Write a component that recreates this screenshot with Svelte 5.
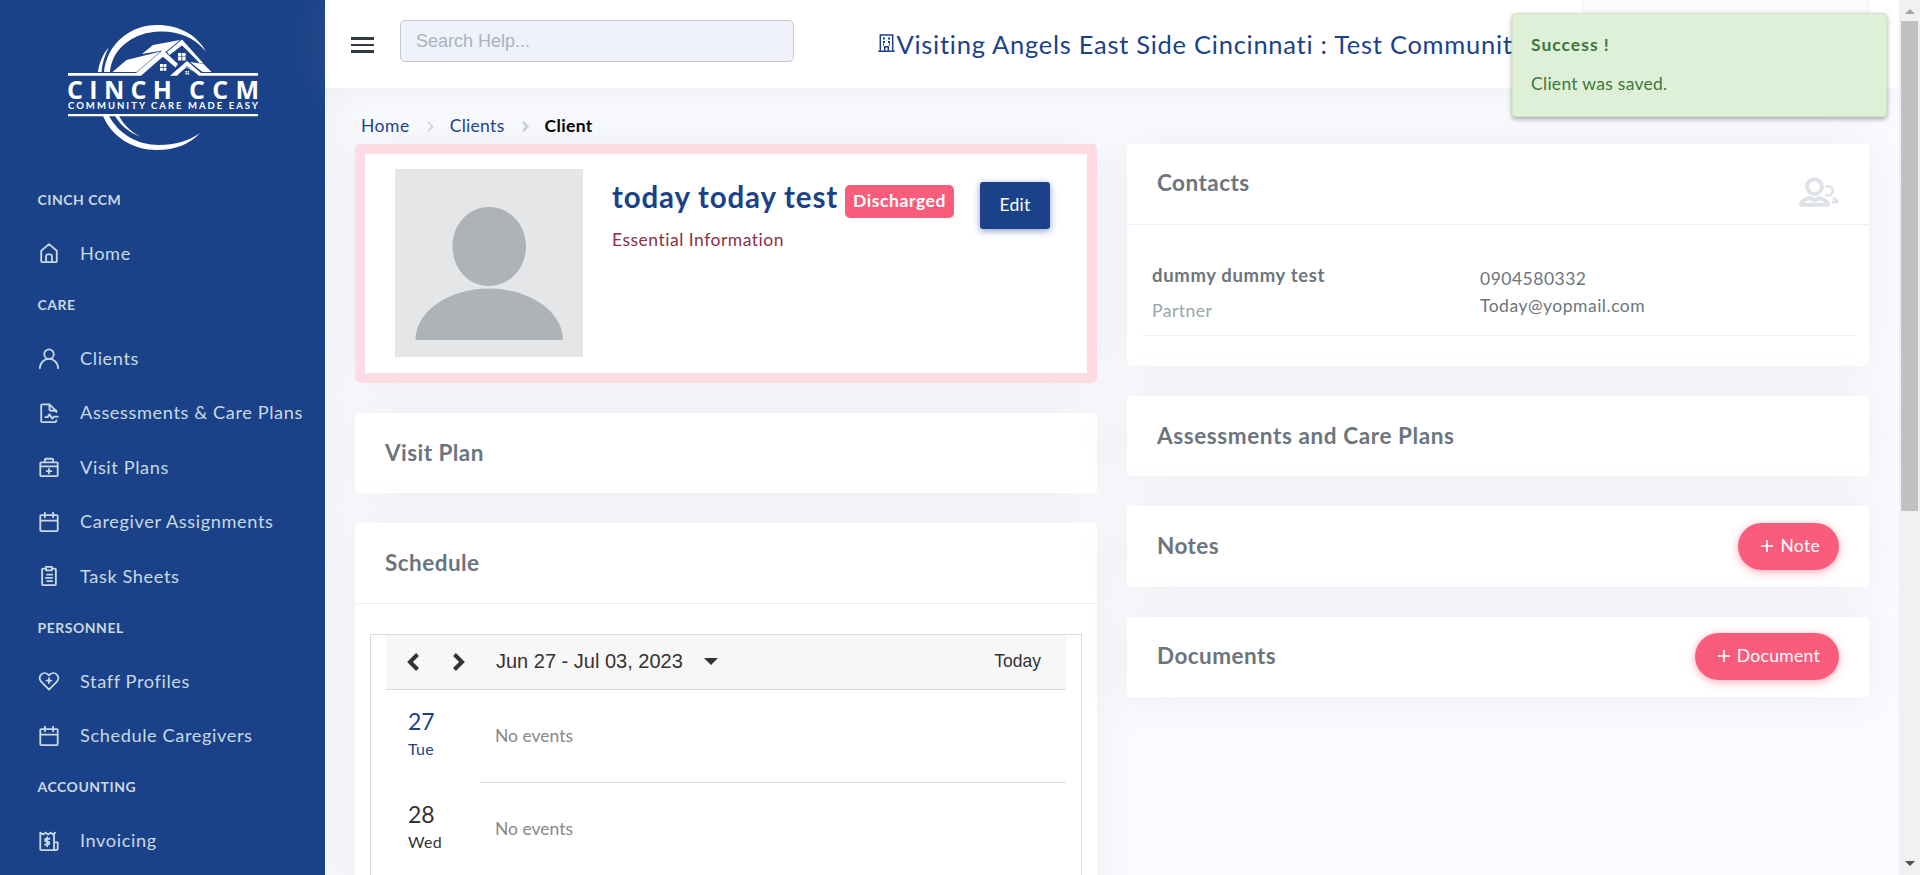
<script>
  const menu = [
    { title: 'CINCH CCM', items: [{ label: 'Home', icon: 'home' }] },
    {
      title: 'CARE',
      items: [
        { label: 'Clients', icon: 'user' },
        { label: 'Assessments & Care Plans', icon: 'file' },
        { label: 'Visit Plans', icon: 'medkit' },
        { label: 'Caregiver Assignments', icon: 'calendar' },
        { label: 'Task Sheets', icon: 'clipboard' }
      ]
    },
    {
      title: 'PERSONNEL',
      items: [
        { label: 'Staff Profiles', icon: 'heart' },
        { label: 'Schedule Caregivers', icon: 'calendar' }
      ]
    },
    { title: 'ACCOUNTING', items: [{ label: 'Invoicing', icon: 'invoice' }] }
  ];

  const icons = {
    home: 'M3.500 9.500 12 2.300l8.500 7.200V21a1 1 0 0 1-1 1h-15a1 1 0 0 1-1-1ZM8.800 22v-6.500a2 2 0 0 1 2-2h2.400a2 2 0 0 1 2 2V22',
    user: 'M12 13a5.200 5.200 0 1 0 0-10.400a5.200 5.200 0 0 0 0 10.400ZM2 23c.3-5.800 4.500-10 10-10s9.700 4.200 10 10',
    file: 'M12.500 2.500h-8a1 1 0 0 0-1 1v17.500a1 1 0 0 0 1 1h13.500a2 2 0 0 0 2-2M12.500 2.500l7.500 7.500M12.500 2.500V7.500a2 2 0 0 0 2 2H20v1.500M8 16.500h2.500l2-3 3 4.500 2-2H21.500',
    medkit: 'M3.500 7h17a1 1 0 0 1 1 1v13a1 1 0 0 1-1 1h-17a1 1 0 0 1-1-1V8a1 1 0 0 1 1-1ZM7.500 7V4a1 1 0 0 1 1-1h7a1 1 0 0 1 1 1v3M2.500 11.300h19M12 14v5M9.500 16.500h5',
    calendar: 'M3.500 4.500h17a1 1 0 0 1 1 1V21a1 1 0 0 1-1 1h-17a1 1 0 0 1-1-1V5.500a1 1 0 0 1 1-1ZM2.500 10.500h19M7.500 1.800v5M16.500 1.800v5',
    clipboard: 'M8.500 4H5.500a1 1 0 0 0-1 1v16a1 1 0 0 0 1 1h13a1 1 0 0 0 1-1V5a1 1 0 0 0-1-1h-3M8.800 2h6.400v3.800H8.800ZM10 10.500h5.500M8.500 14h7M10 17.500h5.500',
    heart: 'M12 21.500 3.400 12.700a5.400 5.400 0 0 1 0-7.700 5.500 5.500 0 0 1 7.700 0l.9.700.9-.7a5.500 5.500 0 0 1 7.700 0 5.400 5.400 0 0 1 0 7.700ZM12 8.800v5.400M9.300 11.500h5.400',
    invoice: 'M2.500 3l3 1.800L8.300 3l2.700 1.800L13.700 3l3 1.800L18.500 3M2.500 3v18a1 1 0 0 0 1 1h16a2 2 0 0 0 2-2v-6.500h-4M17.500 4v16a2 2 0 0 0 2 2M12.500 9.500H9.300a1.600 1.600 0 0 0 0 3.200h1.400a1.600 1.600 0 0 1 0 3.200H7.500M10 7.800v10'
  };

  const days = [
    { num: '27', name: 'Tue', today: true },
    { num: '28', name: 'Wed', today: false }
  ];
</script>

<div class="page">
  <aside>
    <div class="brand">
      <svg width="194" height="130" viewBox="66 23 194 130" fill="#fff">
        <path d="M104 72C107 43 131 25 157 25c22 0 40 10 49 26.500C194 37 178 31 160 31.500 134 32 112 48 110 72ZM98 72c1-9 5-18 11-25-4 8-7 16-7.500 25Z" />
        <path d="M103 116h6c10 18 28 29 50 29 16 0 30-4 41-12-10 11-25 17-43 17-24 0-45-13-54-34ZM115 116h4c5 9 12 16 22 21-11-4-20-11-26-21Z" />
        <path d="M68 73h68l27-23 15 14-2.500 3.500L163 56.500 141 75.700H68ZM112.500 72l14-12 34-8.500-24 20.500ZM142 54l11-9 27-5-14.500 12-3-1.500ZM167 52l15-12.500 21.500 24-4-.5L182 45l-12.500 10ZM170 75.700 187 61l14 12h57v2.700h-59L187 66l-10 9.700ZM190 62l13.500 2 8 8h-9Z" />
        <path d="M153 63l10-6.500 9 7M174 51l8-6 10 9M181 71l6-4 6 4" fill="none" stroke="#fff" stroke-width=".7" />
        <path d="M160 64h2.900v3H160zM163.500 64h2.900v3h-2.900zM160 67.700h2.900v3H160zM163.500 67.700h2.900v3h-2.900zM178 53h3.400v3.400H178zM182.200 53h3.400v3.400h-3.400zM178 57h3.400v3.400H178zM182.200 57h3.400v3.400h-3.400zM185.500 71h1.500v1.500h-1.500zM187.600 71h1.500v1.500h-1.500zM185.500 73.100h1.500v1.500h-1.500zM187.600 73.100h1.500v1.500h-1.500z" />
        <path d="M68 114h190v2.200H68z" />
        <text x="67" y="98.500" class="logo1" textLength="105">CINCH</text>
        <text x="189" y="98.500" class="logo1" textLength="70">CCM</text>
        <text x="68" y="109" class="logo2" textLength="190">COMMUNITY CARE MADE EASY</text>
      </svg>
    </div>
    <nav>
      {#each menu as group}
        <h6>{group.title}</h6>
        {#each group.items as item}
          <a href="#top">
            <svg width="22" height="22" viewBox="0 0 24 24"><path d={icons[item.icon]} /></svg>
            <span>{item.label}</span>
          </a>
        {/each}
      {/each}
    </nav>
  </aside>

  <div class="main">
    <header>
      <div class="burger"><i></i><i></i><i></i></div>
      <div class="search"><span>Search Help...</span></div>
      <div class="org">
        <svg width="17" height="18" viewBox="0 0 17 18" fill="none" stroke="#1b4289" stroke-width="1.500"><path d="M2.300 17V1h12.400v16M.3 17.200h16.400M6.700 17v-4.200h3.600V17" /><path d="M5 4.500h2M10 4.500h2M5 8h2M10 8h2M5 10.500h1M11 10.500h1" stroke-width="1.800" /></svg>
        <span>Visiting Angels East Side Cincinnati : Test Community</span>
      </div>
      <div class="account"></div>
    </header>

    <div class="crumbs">
      <span>Home</span>
      <svg width="8" height="11" viewBox="0 0 8 11"><path d="M2 1l4.500 4.500L2 10" stroke-width="1.700" /></svg>
      <span class="second">Clients</span>
      <svg width="8" height="11" viewBox="0 0 8 11"><path d="M2 1l4.500 4.500L2 10" stroke-width="2.600" /></svg>
      <b>Client</b>
    </div>

    <div class="columns">
      <div class="col">
        <section class="card profile">
          <svg class="avatar" width="188" height="188" viewBox="0 0 188 188"><path fill="#e4e6e8" d="M0 0h188v188H0z" /><path fill="#aeb3b7" d="M94 38c21 0 37 18 37 39.500S115 117 94 117 57.500 99 57.500 77.500 73 38 94 38ZM20.500 171c0-29 34-51.500 73.500-51.500s74 22.500 74 51.500Z" /></svg>
          <div class="who">
            <div class="nameline"><span class="name">today today test</span><span class="badge">Discharged</span></div>
            <div class="essential">Essential Information</div>
          </div>
          <button class="edit">Edit</button>
        </section>

        <section class="card bar"><h4>Visit Plan</h4></section>

        <section class="card schedule">
          <div class="head"><h4>Schedule</h4></div>
          <div class="calendar">
            <div class="tools">
              <svg width="12" height="18" viewBox="0 0 12 18"><path d="M10.500 1.500 3 9l7.500 7.500" /></svg>
              <svg width="12" height="18" viewBox="0 0 12 18"><path d="M1.500 1.500 9 9l-7.500 7.500" /></svg>
              <span class="range">Jun 27 - Jul 03, 2023</span>
              <i class="caret"></i>
              <span class="today">Today</span>
            </div>
            {#each days as day}
              <div class="day">
                <div class="date" class:current={day.today}><span class="num">{day.num}</span><span class="dow">{day.name}</span></div>
                <div class="events">No events</div>
              </div>
            {/each}
          </div>
        </section>
      </div>

      <div class="col">
        <section class="card contacts">
          <div class="head">
            <h4>Contacts</h4>
            <svg width="40" height="30" viewBox="0 0 40 30"><path d="M15.500 2.200a7.400 7.400 0 1 1 0 14.800a7.400 7.400 0 0 1 0-14.800Z" /><path d="M2 27.800c0-3.500 5-6.300 9.300-6.600 2.200 0 2.500 2 4.200 2s2-2 4.200-2c4.300.3 9.300 3.100 9.300 6.600Z" /><path d="M26.500 10.200a4.600 4.600 0 1 1-.5 7M34 20.600c2.200 1.200 4 2.800 4.200 4.400h-5.200" stroke-width="2.600" /></svg>
          </div>
          <div class="person">
            <div class="left"><b>dummy dummy test</b><span class="role">Partner</span></div>
            <div class="right"><span>0904580332</span><span>Today@yopmail.com</span></div>
          </div>
        </section>
        <section class="card bar"><h4 class="long">Assessments and Care Plans</h4></section>
        <section class="card bar"><h4>Notes</h4><button class="add"><svg width="12" height="12" viewBox="0 0 12 12"><path d="M6 0v12M0 6h12" /></svg><span>Note</span></button></section>
        <section class="card bar"><h4>Documents</h4><button class="add"><svg width="12" height="12" viewBox="0 0 12 12"><path d="M6 0v12M0 6h12" /></svg><span>Document</span></button></section>
      </div>
    </div>
  </div>

  <div class="scrollbar"><i class="up"></i><div class="thumb"></div><i class="down"></i></div>

  <div class="toast"><b>Success !</b><span>Client was saved.</span></div>
</div>

<style>
  :global(body) { margin: 0; overflow: hidden; }
  .page { display: flex; position: relative; width: 1920px; height: 875px; overflow: hidden; background: #fafbfe; color: #6c757d; font: 17.500px/1.500 Lato, sans-serif; letter-spacing: .5px; }
  .page * { box-sizing: border-box; }
  span, h4, b { white-space: nowrap; }
  aside { flex: none; width: 325px; height: 875px; background: #1b4289; box-shadow: 0 0 44px rgba(154, 161, 171, .15); }
  .brand { height: 175.500px; padding: 23px 0 0 66px; }
  .brand svg { display: block; letter-spacing: 0; }
  .logo1 { font: 700 25px "Open Sans", sans-serif; }
  .logo2 { font: 700 9.500px Lato, sans-serif; }
  h6 { margin: 0; height: 50.500px; padding: 14px 0 0 37.500px; font-size: 14px; line-height: 20px; font-weight: 700; letter-spacing: .52px; color: #c8d9e3; }
  nav a { display: flex; align-items: center; height: 54.500px; padding-left: 37.500px; gap: 20.500px; color: #c8d9e3; text-decoration: none; font-size: 18.200px; letter-spacing: .6px; }
  nav svg { flex: none; fill: none; stroke: #c8d9e3; stroke-width: 2; stroke-linejoin: round; stroke-linecap: round; }

  .main { flex: none; width: 1574px; height: 875px; }
  header { position: relative; display: flex; height: 88px; background: #fff; box-shadow: 0 0 44px rgba(154, 161, 171, .15); }
  .burger { display: flex; flex-direction: column; gap: 4px; margin: 37px 0 0 26px; }
  .burger i { width: 23px; height: 2.500px; background: #313a46; }
  .search { width: 394px; height: 42px; margin: 20px 0 0 26px; padding: 0 15px; border: 1px solid #c8c8c8; border-radius: 5px; background: #eff2fa; color: #a9b4bf; font: 18px/41px "Liberation Sans", sans-serif; letter-spacing: 0; }
  .org { position: relative; z-index: 1; display: flex; align-items: center; gap: 1.500px; height: 88px; margin-left: 84px; color: #1b4289; font-size: 25.500px; letter-spacing: .73px; }
  .org svg { margin-top: -3px; }
  .account { position: absolute; left: 1257px; top: 0; width: 287px; height: 88px; border: 1px solid #eff1f9; border-top: 0; background: #fafbfd; }
  .crumbs { display: flex; align-items: center; height: 56px; padding: 20px 0 0 36px; gap: 16px; color: #1b4289; }
  .crumbs svg { fill: none; stroke: #cbd2d9; }
  .crumbs .second { letter-spacing: .3px; }
  .crumbs b { color: #000; letter-spacing: .35px; }
  .columns { display: grid; grid-template-columns: 742px 742px; gap: 30px; padding-left: 30px; }
  .col { display: flex; flex-direction: column; gap: 30px; }
  .card { background: #fff; border-radius: 4px; box-shadow: 0 0 44px rgba(154, 161, 171, .15); }
  h4 { margin: -1px 0 0; font-size: 22.500px; line-height: 30px; font-weight: 700; letter-spacing: .45px; color: #6c757d; }
  .long { letter-spacing: .6px; }
  .profile { display: flex; align-items: flex-start; height: 239px; border: 10px solid #fddde3; border-radius: 5px; padding: 15px 30px; }
  .who { width: 368px; padding: 9px 0 0 29px; }
  .nameline { display: flex; align-items: center; gap: 7px; height: 47px; }
  .name { color: #1b4289; font-size: 29.500px; font-weight: 700; line-height: 38px; padding-bottom: 9px; letter-spacing: .830px; }
  .badge { height: 33px; padding: 0 8px; border-radius: 5px; background: #fa5c7c; color: #fff; font-weight: 700; line-height: 32px; letter-spacing: .57px; }
  .essential { padding-top: 2px; color: #8b2f47; }
  button { border: 0; color: #fff; font: inherit; letter-spacing: .3px; }
  .edit { width: 70px; height: 47px; margin: 13px 0 0 29px; padding: 0; border-radius: 3px; background: #1b4289; box-shadow: 0 2px 7px rgba(27, 66, 137, .5); }
  .bar { display: flex; align-items: center; justify-content: space-between; height: 80.400px; padding: 0 30px; }
  .head { display: flex; align-items: center; height: 80.500px; padding: 0 30px; border-bottom: 1px solid #eef0f5; }
  .schedule { height: 600px; }
  .calendar { width: 712px; height: 500px; margin: 30px 0 0 15px; padding: 0 15px; border: 1px solid #dadada; }
  .tools { display: flex; align-items: center; height: 55px; padding: 0 25px 0 21px; background: #f7f7f7; border-bottom: 1px solid #dadada; color: #333; font: 20px "Liberation Sans", sans-serif; letter-spacing: 0; }
  .tools svg { fill: none; stroke: #333; stroke-width: 4; margin-right: 34px; }
  .range { margin-left: -3px; }
  .caret { margin-left: 21px; border: 7px solid transparent; border-top-color: #333; border-bottom: 0; }
  .today { margin-left: auto; font-size: 17.500px; }
  .day { display: flex; height: 93px; }
  .date { display: flex; flex-direction: column; width: 94px; padding: 14px 0 0 22px; color: #333; }
  .date.current { color: #1b4289; }
  .num { font-size: 23px; line-height: 34px; letter-spacing: 0; }
  .dow { font-size: 16px; line-height: 22px; letter-spacing: .3px; }
  .events { flex: 1; padding: 33px 0 0 15px; border-bottom: 1px solid #dadada; color: #888; letter-spacing: 0; }
  .contacts { height: 222px; }
  .contacts .head { justify-content: space-between; }
  .contacts .head svg { margin-top: 16px; fill: none; stroke: #dee2e6; stroke-width: 4; stroke-linejoin: round; stroke-linecap: butt; }
  .person { display: flex; height: 111px; margin: 0 15px; padding: 37px 10px 0; border-bottom: 1px solid #eef0f2; }
  .left { display: flex; flex-direction: column; width: 328px; gap: 10px; }
  .left b { font-size: 18.500px; letter-spacing: .65px; line-height: 26px; }
  .right { display: flex; flex-direction: column; padding-top: 3px; line-height: 27.500px; }
  .role { color: #98a6ad; }
  .add { display: flex; align-items: center; height: 47px; margin-top: -1px; padding: 0 19px 0 23px; gap: 7px; border-radius: 24px; background: #fa5c7c; box-shadow: 0 2px 8px rgba(250, 92, 124, .5); }
  .add svg { stroke: #fff; stroke-width: 1.700; }
  .scrollbar { position: relative; z-index: 2; display: flex; flex-direction: column; align-items: center; width: 21px; height: 875px; background: #f1f1f1; }
  .thumb { width: 17px; height: 490px; background: #c1c1c1; margin-top: 7px; }
  .up { margin-top: 9px; border: 5px solid transparent; border-bottom-color: #a3a3a3; border-top: 0; }
  .down { margin-top: 350px; border: 5px solid transparent; border-top-color: #505050; border-bottom: 0; }
  .toast { position: absolute; z-index: 3; left: 1512px; top: 13px; width: 375px; height: 104px; display: flex; flex-direction: column; gap: 13px; padding: 18px; border: 1px solid #d0e9c6; border-radius: 4px; background: #dff0d8; box-shadow: 0 2px 5px rgba(0, 0, 0, .35); color: #3c763d; letter-spacing: .28px; }
  .toast b { letter-spacing: 1px; }
</style>
